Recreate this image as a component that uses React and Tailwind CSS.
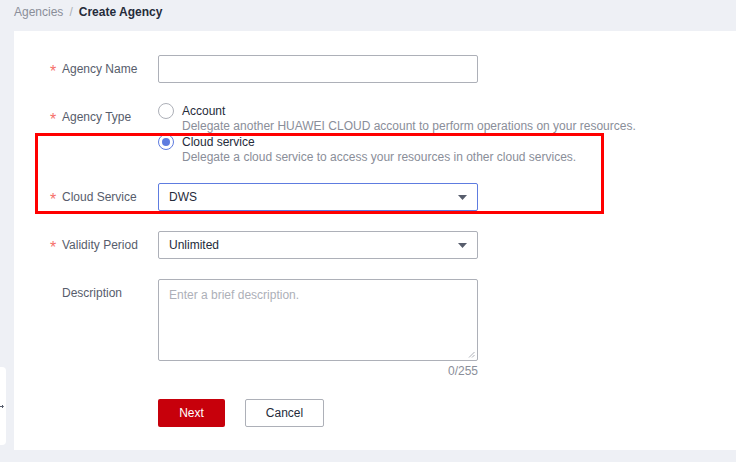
import React from 'react';

function Label({ text, required = true, className = '' }) {
  return (
    <div className={`w-[108px] shrink-0 flex items-center h-[28px] text-[12px] text-[#575d6c] ${className}`}>
      <span className={`w-[12px] relative top-[3px] text-[16px] leading-[16px] text-[#f66f6a] ${required ? '' : 'invisible'}`}>*</span>
      <span>{text}</span>
    </div>
  );
}

function Caret() {
  return (
    <svg width="9" height="5" viewBox="0 0 9 5" className="text-[#575d6c]">
      <path d="M0 0h9L4.5 5z" fill="currentColor" />
    </svg>
  );
}

function Select({ value, focused }) {
  return (
    <div
      className={`w-[320px] h-[28px] flex items-center justify-between pl-[10px] pr-[10px] border rounded-[2px] text-[12px] text-[#252b3a] ${
        focused ? 'border-[#5e7ce0]' : 'border-[#adb0b8]'
      }`}
    >
      <span>{value}</span>
      <Caret />
    </div>
  );
}

function Radio({ checked, title, desc }) {
  return (
    <div className="flex">
      <div className="w-[24px] shrink-0">
        <div
          className={`w-[16px] h-[16px] rounded-full border flex items-center justify-center bg-white ${
            checked ? 'border-[#5e7ce0]' : 'border-[#adb0b8]'
          }`}
        >
          {checked && <div className="w-[8px] h-[8px] rounded-full bg-[#5e7ce0]" />}
        </div>
      </div>
      <div>
        <div className="h-[16px] leading-[16px] text-[12px] text-[#252b3a]">{title}</div>
        <div className="h-[15px] leading-[15px] text-[12px] text-[#8a8e99]">{desc}</div>
      </div>
    </div>
  );
}

export default function App() {
  return (
    <div className="relative w-[736px] h-[462px] overflow-hidden bg-[#eef0f5] font-['Liberation_Sans',Arial,sans-serif]">
      {/* breadcrumb */}
      <div className="h-[31px] pl-[14px] pt-[4px] flex items-start text-[12px] leading-[16px]">
        <span className="text-[#8a8e99]">Agencies</span>
        <span className="text-[#adb0b8] mx-[6px]">/</span>
        <span className="text-[#252b3a] font-bold">Create Agency</span>
      </div>

      {/* card */}
      <div className="relative ml-[14px] h-[419px] bg-white pt-[24px] pl-[36px]">
        {/* agency name */}
        <div className="flex">
          <Label text="Agency Name" />
          <div className="w-[320px] h-[28px] border border-[#adb0b8] rounded-[2px]" />
        </div>

        {/* agency type */}
        <div className="flex mt-[19px]">
          <Label text="Agency Type" className="pt-[2px]" />
          <div>
            <div className="pt-[1px]">
              <Radio
                title="Account"
                desc="Delegate another HUAWEI CLOUD account to perform operations on your resources."
              />
            </div>
            <Radio
              checked
              title="Cloud service"
              desc="Delegate a cloud service to access your resources in other cloud services."
            />
          </div>
        </div>

        {/* cloud service */}
        <div className="flex mt-[18px]">
          <Label text="Cloud Service" />
          <Select value="DWS" focused />
        </div>

        {/* validity */}
        <div className="flex mt-[20px]">
          <Label text="Validity Period" />
          <Select value="Unlimited" />
        </div>

        {/* description */}
        <div className="flex mt-[20px]">
          <Label text="Description" required={false} />
          <div className="w-[320px]">
            <div className="relative h-[82px] border border-[#adb0b8] rounded-[2px] px-[10px] pt-[6px] text-[12px] text-[#adb0b8]">
              Enter a brief description.
              <svg width="7" height="7" viewBox="0 0 7 7" className="absolute right-[2px] bottom-[2px]">
                <path d="M6.5 1L1 6.5M6.5 4L4 6.5" stroke="#adb0b8" strokeWidth="1" />
              </svg>
            </div>
            <div className="text-right text-[12px] text-[#8a8e99] mt-[2px] leading-[16px]">0/255</div>
          </div>
        </div>

        {/* buttons */}
        <div className="flex gap-[20px] pl-[108px] mt-[20px]">
          <button className="w-[67px] h-[28px] rounded-[2px] bg-[#c7000b] text-white text-[12px]">Next</button>
          <button className="w-[79px] h-[28px] rounded-[2px] border border-[#adb0b8] bg-white text-[#252b3a] text-[12px]">
            Cancel
          </button>
        </div>

        {/* annotation box */}
        <div className="absolute left-[21px] top-[102px] w-[569px] h-[81px] border-[3px] border-[#ff0000] pointer-events-none" />
      </div>

      {/* collapsed sidebar tab */}
      <div className="absolute left-0 top-[367px] w-[6px] h-[78px] bg-white rounded-r-[4px] flex items-center">
        <svg width="4" height="5" viewBox="0 0 4 5">
          <path d="M0 2.5h3M2 1l1.5 1.5L2 4" stroke="#575d6c" strokeWidth="1" fill="none" />
        </svg>
      </div>
    </div>
  );
}
